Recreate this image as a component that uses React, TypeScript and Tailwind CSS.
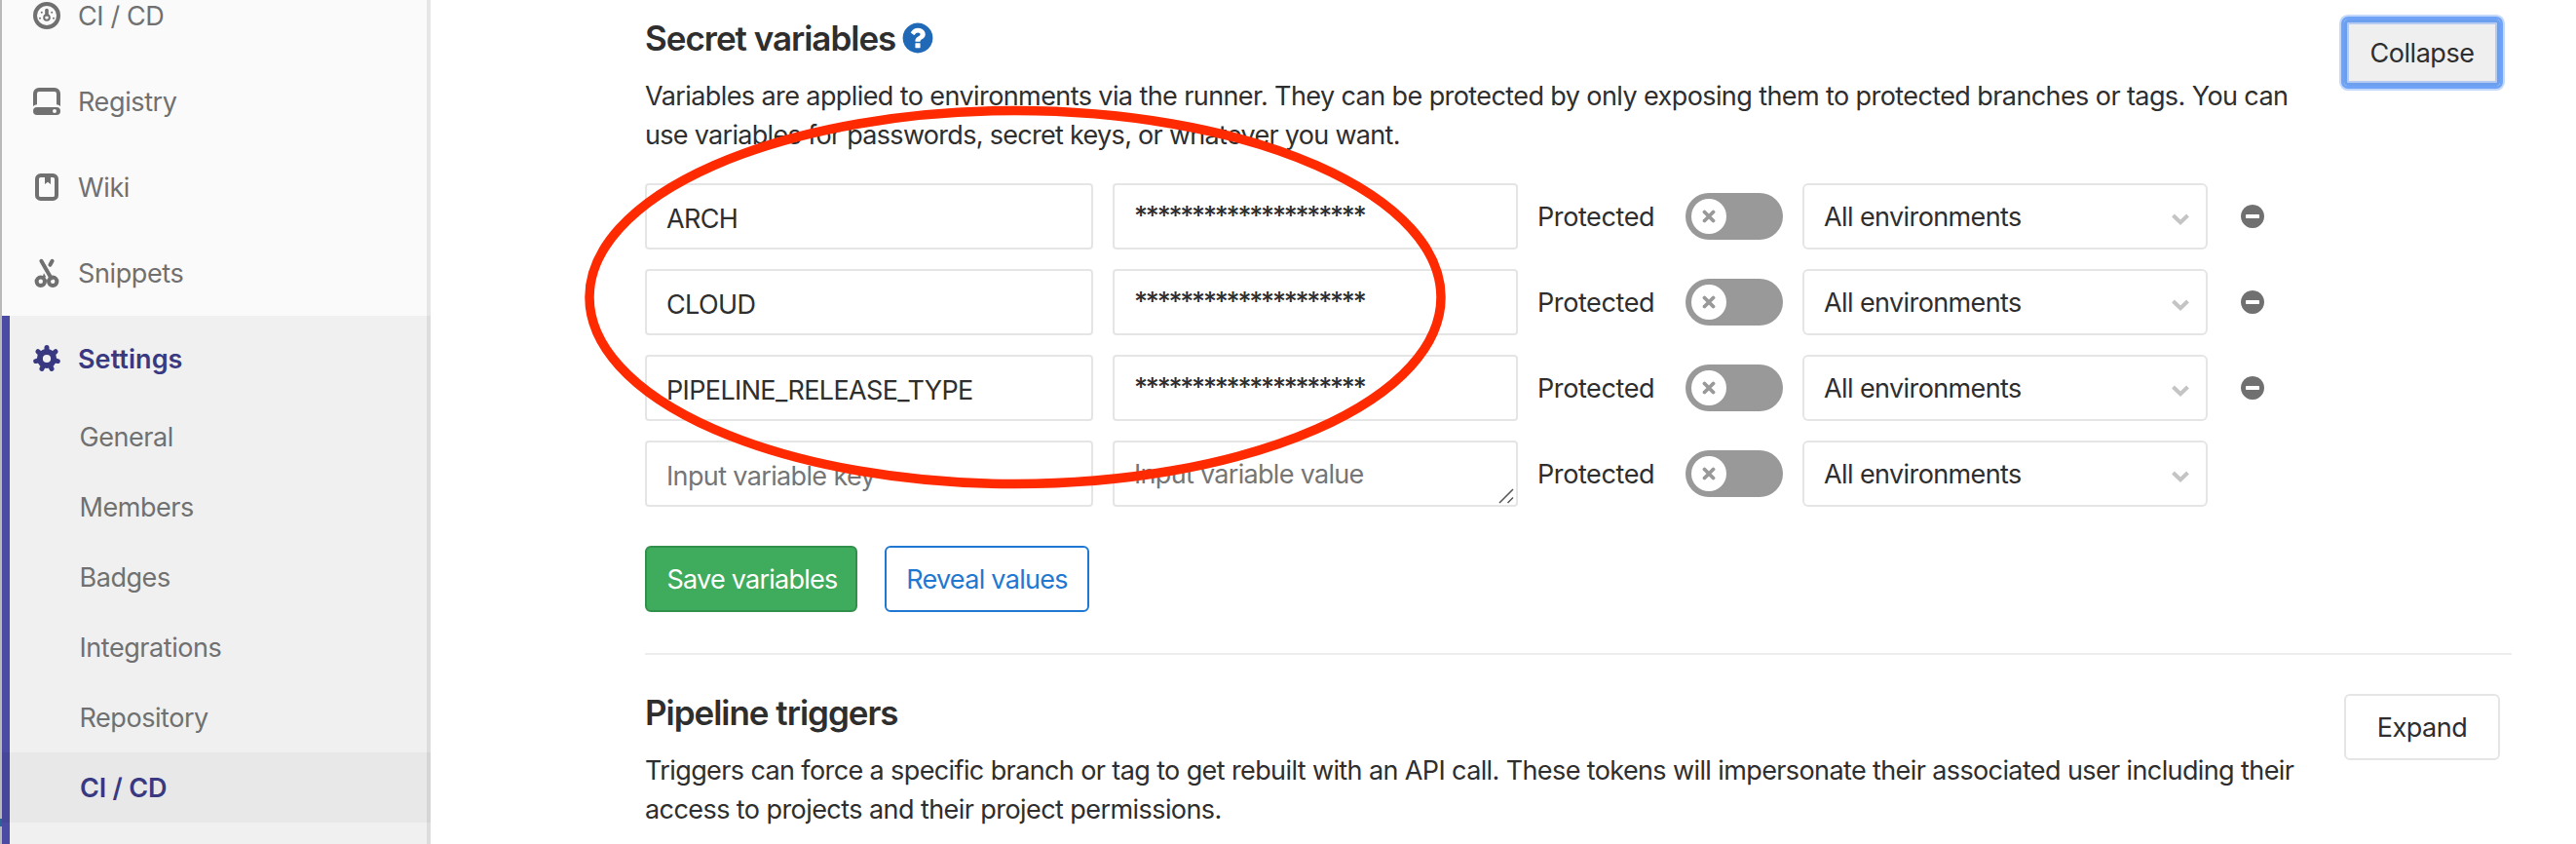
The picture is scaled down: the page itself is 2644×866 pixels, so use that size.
import type { ReactNode } from "react";

const RING =
  "M1664 896q0 209-103 385.5t-279.500 279.500-385.500 103-385.500-103-279.500-279.500-103-385.500 103-385.500 279.500-279.500 385.500-103 385.500 103 279.500 279.500 103 385.500z";

function CiIcon() {
  return (
    <svg viewBox="0 0 16 16" className="size-8" fill="none" stroke="currentColor">
      <circle cx="8" cy="8" r="6" strokeWidth="2" />
      <circle cx="8" cy="9" r="1.4" strokeWidth="1" />
      <path d="M8 5.300v2.200" strokeWidth="1.800" strokeLinecap="round" />
      <g fill="currentColor" stroke="none">
        <circle cx="5.400" cy="6.400" r=".5" />
        <circle cx="10.600" cy="6.400" r=".5" />
        <circle cx="4.500" cy="9.400" r=".5" />
        <circle cx="11.500" cy="9.400" r=".5" />
      </g>
    </svg>
  );
}

function RegistryIcon() {
  return (
    <svg viewBox="0 0 16 16" className="size-8" fill="currentColor" fillRule="evenodd">
      <path d="M4 1h8a3 3 0 0 1 3 3v6.500a4 4 0 0 0-2-.9V4a1 1 0 0 0-1-1H4a1 1 0 0 0-1 1v5.600a4 4 0 0 0-2 .9V4a3 3 0 0 1 3-3z" />
      <path d="M3 11h10a2 2 0 1 1 0 4H3a2 2 0 1 1 0-4zm9 1a1 1 0 1 0 0 2 1 1 0 0 0 0-2z" />
    </svg>
  );
}

function WikiIcon() {
  return (
    <svg viewBox="0 0 16 16" className="size-8" fill="none" stroke="currentColor">
      <rect x="3" y="2" width="10" height="12" rx="1.800" strokeWidth="2" />
      <path d="M7 2.500h3v4L8.500 5.400 7 6.500z" fill="currentColor" stroke="none" />
    </svg>
  );
}

function SnippetsIcon() {
  return (
    <svg viewBox="0 0 16 16" className="size-8" fill="none" stroke="currentColor">
      <circle cx="4.900" cy="12.400" r="2.100" strokeWidth="2" />
      <circle cx="11.100" cy="12.400" r="2.100" strokeWidth="2" />
      <path d="M5.200 1.900 10.300 10.700" strokeWidth="2" strokeLinecap="round" />
      <path d="M10.800 1.900 9.700 3.900" strokeWidth="2" strokeLinecap="round" />
      <path d="M6.500 8.100 7.700 10.200 5.800 10.300z" fill="currentColor" stroke="none" />
    </svg>
  );
}

const TEETH = [0, 1, 2, 3, 4, 5, 6].map((i) => {
  const a = (i * 2 * Math.PI) / 7 - Math.PI / 2;
  return { x: 8 + 5.8 * Math.cos(a), y: 8 + 5.8 * Math.sin(a) };
});

function GearIcon() {
  return (
    <svg viewBox="0 0 16 16" className="size-8" fill="none" stroke="currentColor">
      <circle cx="8" cy="8" r="3.550" strokeWidth="3" />
      {TEETH.map((t, i) => (
        <path
          key={i}
          d={`M${8 + (t.x - 8) * 0.7} ${8 + (t.y - 8) * 0.7}L${t.x} ${t.y}`}
          strokeWidth="2.500"
          strokeLinecap="round"
        />
      ))}
    </svg>
  );
}

function HelpIcon() {
  return (
    <svg viewBox="0 0 1792 1792" className="size-9 shrink-0">
      <path fill="#1f69b7" d={RING} />
      <path
        fill="#fff"
        d="M1024 1376v-192q0-14-9-23t-23-9h-192q-14 0-23 9t-9 23v192q0 14 9 23t23 9h192q14 0 23-9t9-23zm256-672q0-88-55.500-163t-138.500-116-170-41q-243 0-371 213-15 24 8 42l132 100q7 6 19 6 16 0 25-12 53-68 86-92 34-24 86-24 48 0 85.500 26t37.500 59q0 38-20 61t-68 45q-63 28-115.500 86.500t-52.500 125.500v36q0 14 9 23t23 9h192q14 0 23-9t9-23q0-19 21.500-49.500t54.500-49.500q32-18 49-28.500t46-35 44.500-48 28-60.500 12.500-81z"
      />
    </svg>
  );
}

function MinusIcon() {
  return (
    <svg viewBox="0 0 1792 1792" className="ml-8 size-7 shrink-0">
      <path fill="#707070" d={RING} />
      <path
        fill="#fff"
        d="M1344 960v-128q0-26-19-45t-45-19h-768q-26 0-45 19t-19 45v128q0 26 19 45t45 19h768q26 0 45-19t19-45z"
      />
    </svg>
  );
}

function NavItem({ icon, children }: { icon: ReactNode; children: ReactNode }) {
  return (
    <a className="flex h-22 shrink-0 items-center gap-4 pl-[30px] tracking-[-0.38px] text-[#707070]">
      {icon}
      <span className="pt-0.5">{children}</span>
    </a>
  );
}

function Sidebar() {
  return (
    <aside className="relative flex h-full w-[440px] shrink-0 flex-col overflow-hidden bg-[#fafafa]">
      <nav className="-mt-7 flex flex-1 flex-col">
        <NavItem icon={<CiIcon />}>CI / CD</NavItem>
        <NavItem icon={<RegistryIcon />}>Registry</NavItem>
        <NavItem icon={<WikiIcon />}>Wiki</NavItem>
        <NavItem icon={<SnippetsIcon />}>Snippets</NavItem>
        <div className="flex-1 border-l-8 border-[#4b4ba3] bg-[#f0f0f0]">
          <a className="flex h-22 items-center gap-4 pl-[22px] font-semibold tracking-[0.05px] text-[#393982]">
            <GearIcon />
            <span className="pt-0.5">Settings</span>
          </a>
          <ul className="tracking-[-0.45px] text-[#707070]">
            {["General", "Members", "Badges", "Integrations", "Repository"].map((t) => (
              <li key={t} className="flex h-18 items-center pt-0.5 pl-[71.500px]">
                {t}
              </li>
            ))}
            <li className="-ml-2 flex h-18 items-center border-l-8 border-[#47479a] bg-[#e8e8e8] pt-0.5 pl-[72px] font-semibold tracking-[-0.2px] text-[#393982]">
              CI / CD
            </li>
          </ul>
        </div>
      </nav>
      <div className="absolute inset-y-0 right-0 w-1 bg-black/8" />
    </aside>
  );
}

function Toggle() {
  return (
    <div className="flex h-12 w-[100px] shrink-0 items-center rounded-full bg-[#999] pl-1.5">
      <div className="flex size-9 items-center justify-center rounded-full bg-white">
        <svg viewBox="0 0 14 14" className="size-3.5">
          <path d="M2.500 2.500 11.500 11.500M11.500 2.500 2.500 11.500" stroke="#999" strokeWidth="3.800" strokeLinecap="round" />
        </svg>
      </div>
    </div>
  );
}

function VariableRow({ name }: { name?: string }) {
  return (
    <div className="flex h-17 items-center">
      <div
        className={`flex h-full w-[460px] items-center rounded border-2 border-[#e5e5e5] pt-[5px] pl-5 tracking-[-0.64px] ${name ? "" : "text-[#757575]"}`}
      >
        {name ?? "Input variable key"}
      </div>
      <div className="relative ml-5 flex h-full w-[416px] items-center rounded border-2 border-[#e5e5e5] pl-5">
        {name ? (
          <span className="font-medium tracking-[-2.230px]">********************</span>
        ) : (
          <>
            <span className="pt-0.5 tracking-[-0.69px] text-[#757575]">Input variable value</span>
            <svg viewBox="0 0 16 16" className="absolute right-0.5 bottom-px size-4" stroke="#555" strokeWidth="1.500">
              <path d="M1 15 15 1M9.500 15 15 9.500" />
            </svg>
          </>
        )}
      </div>
      <span className="ml-5 w-[152px] pt-0.5 tracking-[-0.4px]">Protected</span>
      <Toggle />
      <div className="ml-5 flex h-full w-[416px] items-center justify-between rounded-md border-2 border-[#e5e5e5] pr-4 pl-5">
        <span className="pt-0.5 tracking-[-0.6px]">All environments</span>
        <svg viewBox="0 0 20 14" className="mt-1.5 h-3.5 w-5" fill="none" stroke="#c4c4c4" strokeWidth="4">
          <path d="M2.500 3 10 10.200 17.500 3" />
        </svg>
      </div>
      {name && <MinusIcon />}
    </div>
  );
}

function SectionHeader({
  title,
  help,
  action,
  children,
}: {
  title: string;
  help?: boolean;
  action: ReactNode;
  children: ReactNode;
}) {
  return (
    <header className="flex items-start justify-between pr-3">
      <div className="w-[1710px] whitespace-nowrap">
        <h4 className="mb-[21px] flex h-[38px] items-center gap-[5px] text-[35px] leading-[38px] font-semibold tracking-[-1.02px]">
          {title}
          {help && <HelpIcon />}
        </h4>
        <p className="leading-10">{children}</p>
      </div>
      {action}
    </header>
  );
}

export default function App() {
  return (
    <div className="relative flex h-[866px] w-[2644px] overflow-hidden bg-white font-['Inter','Liberation_Sans',sans-serif] text-[27px] leading-10 text-[#2e2e2e]">
      <div className="flex w-0.5 shrink-0 flex-col bg-[#b9b9b9]">
        <div className="mt-[840px] h-2 bg-[#2a6496]" />
      </div>
      <Sidebar />
      <main className="ml-[220px] flex w-[1916px] flex-col">
        <section className="border-b-2 border-[#ededed] pt-5 pb-[42px]">
          <SectionHeader
            title="Secret variables"
            help
            action={
              <button className="h-17 w-40 rounded-sm bg-[#efefef] pt-0.5 tracking-[-0.45px] shadow-[inset_0_0_0_3px_#6c9fee,inset_0_0_0_5px_#b5cbf1,0_0_0_3px_#6fa3f7,0_0_0_5px_#c3d8fb]">
                Collapse
              </button>
            }
          >
            <span className="tracking-[-0.59px]">
              Variables are applied to environments via the runner. They can be protected by only exposing them to
              protected branches or tags. You can
            </span>
            <br />
            <span className="tracking-[-0.7px]">use variables for passwords, secret keys, or whatever you want.</span>
          </SectionHeader>
          <div className="mt-[29px] flex flex-col gap-5">
            <VariableRow name="ARCH" />
            <VariableRow name="CLOUD" />
            <VariableRow name="PIPELINE_RELEASE_TYPE" />
            <VariableRow />
          </div>
          <div className="mt-10 flex gap-7">
            <button className="h-17 w-[218px] rounded-md border-2 border-[#31904c] bg-[#3fab5c] pt-0.5 pl-0.5 tracking-[-0.75px] whitespace-nowrap text-white">
              Save variables
            </button>
            <button className="h-17 w-[210px] rounded-md border-2 border-[#1f78d1] bg-white pt-0.5 tracking-[-0.7px] whitespace-nowrap text-[#1f78d1]">
              Reveal values
            </button>
          </div>
        </section>
        <section className="pt-10">
          <SectionHeader
            title="Pipeline triggers"
            action={
              <button className="h-17 w-40 rounded-md border-2 border-[#e5e5e5] bg-white pt-0.5 tracking-[-0.5px]">
                Expand
              </button>
            }
          >
            <span className="tracking-[-0.61px]">
              Triggers can force a specific branch or tag to get rebuilt with an API call. These tokens will impersonate
              their associated user including their
            </span>
            <br />
            <span className="tracking-[-0.57px]">access to projects and their project permissions.</span>
          </SectionHeader>
        </section>
      </main>
      <svg viewBox="0 0 884 394" className="pointer-events-none absolute top-[107.500px] left-[599.500px] h-[394px] w-[884px]">
        <ellipse cx="442" cy="197" rx="437" ry="191.500" fill="none" stroke="#ff2a00" strokeWidth="9.500" />
      </svg>
    </div>
  );
}
